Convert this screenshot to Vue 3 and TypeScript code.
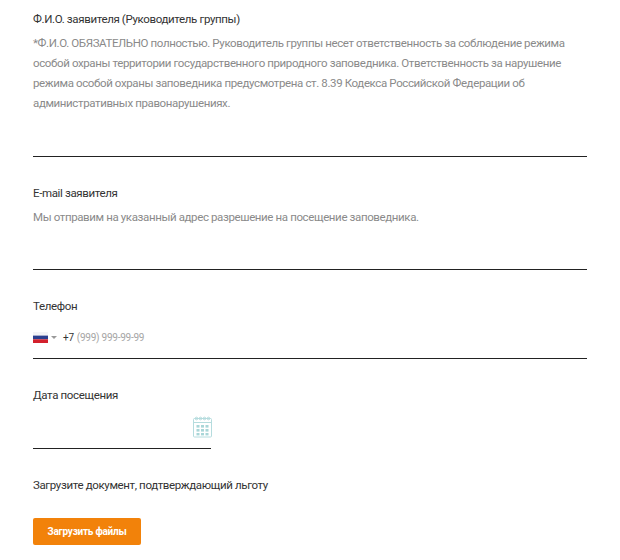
<script setup lang="ts">
const lines: string[] = [
  '*Ф.И.О. ОБЯЗАТЕЛЬНО полностью. Руководитель группы несет ответственность за соблюдение режима',
  'особой охраны территории государственного природного заповедника. Ответственность за нарушение',
  'режима особой охраны заповедника предусмотрена ст. 8.39 Кодекса Российской Федерации об',
  'административных правонарушениях.',
]
</script>

<template>
  <div class="form">
    <section class="field first">
      <div class="label">Ф.И.О. заявителя (Руководитель группы)</div>
      <p class="hint"><span v-for="l in lines" :key="l" class="hl">{{ l }}</span></p>
      <div class="input tall"></div>
    </section>
    <section class="field second">
      <div class="label">E-mail заявителя</div>
      <p class="hint"><span class="hl">Мы отправим на указанный адрес разрешение на посещение заповедника.</span></p>
      <div class="input tall2"></div>
    </section>
    <section class="field third">
      <div class="label">Телефон</div>
      <div class="input phone">
        <svg class="flag" width="15" height="11" viewBox="0 0 15 11">
          <rect width="15" height="3.6" fill="#f3f3f6" />
          <rect y="3.6" width="15" height="3.7" fill="#2b3f8f" />
          <rect y="7.3" width="15" height="3.7" fill="#d3202c" />
        </svg>
        <span class="caret"></span>
        <span class="code">+7</span>
        <span class="ph">(999) 999-99-99</span>
      </div>
    </section>
    <section class="field fourth">
      <div class="label">Дата посещения</div>
      <div class="date">
        <svg class="cal" width="20" height="22" viewBox="0 0 20 22" fill="none" stroke="#b5dcde" stroke-width="1">
          <rect x="0.5" y="2.5" width="18" height="18.5" rx="1" />
          <path d="M0.5 6.5H18.5" />
          <circle cx="3.5" cy="2.5" r="1.3" />
          <circle cx="7.5" cy="2.5" r="1.3" />
          <circle cx="11.5" cy="2.5" r="1.3" />
          <circle cx="15.5" cy="2.5" r="1.3" />
          <g fill="#a9d6d8" stroke="none">
            <rect x="3.5" y="9" width="3" height="2.6" />
            <rect x="8" y="9" width="3" height="2.6" />
            <rect x="12.5" y="9" width="3" height="2.6" />
            <rect x="3.5" y="13" width="3" height="2.6" />
            <rect x="8" y="13" width="3" height="2.6" />
            <rect x="12.5" y="13" width="3" height="2.6" />
            <rect x="3.5" y="17" width="3" height="2.4" />
            <rect x="8" y="17" width="3" height="2.4" />
            <rect x="12.5" y="17" width="3" height="2.4" />
          </g>
        </svg>
      </div>
    </section>
    <section class="field fifth">
      <div class="label">Загрузите документ, подтверждающий льготу</div>
      <button class="upload" type="button">Загрузить файлы</button>
    </section>
  </div>
</template>

<style>
html, body { background: #fff; }
</style>

<style scoped>
.form {
  width: 554px;
  padding: 10px 0 0 33px;
  font-family: Roboto, "Noto Sans", sans-serif;
  color: #333;
}
.field { display: flex; flex-direction: column; }
.label {
  font-size: 11.5px;
  line-height: 18px;
  letter-spacing: -0.36px;
  color: #333;
  white-space: nowrap;
}
.hint {
  margin: 5px 0 0;
  font-size: 11.5px;
  line-height: 20px;
  letter-spacing: -0.38px;
  color: #8a8a8a;
}
.hl { display: block; white-space: nowrap; }
.input { border-bottom: 1px solid #222; }
.tall { height: 43px; }
.tall2 { height: 42px; }
.second { margin-top: 27px; }
.third { margin-top: 27px; }
.phone {
  display: flex;
  align-items: center;
  height: 44px;
  font-size: 10px;
  letter-spacing: -0.25px;
  padding-top: 1px;
  box-sizing: border-box;
}
.flag { display: block; }
.caret {
  width: 0;
  height: 0;
  margin-left: 3px;
  border-left: 3px solid transparent;
  border-right: 3px solid transparent;
  border-top: 3px solid #999;
}
.code { margin-left: 6px; color: #333; }
.ph { margin-left: 3px; color: #a5a5a5; }
.fourth { margin-top: 27px; }
.date {
  position: relative;
  width: 178px;
  height: 44px;
  border-bottom: 1px solid #222;
}
.cal { position: absolute; right: -2px; top: 12px; }
.fifth { margin-top: 27px; }
.upload {
  align-self: flex-start;
  width: 108px;
  height: 27px;
  margin-top: 24px;
  border: 0;
  border-radius: 2px;
  background: #f2820a;
  color: #fff;
  font-family: inherit;
  font-size: 10px;
  font-weight: 700;
  letter-spacing: -0.25px;
  padding: 0;
}
</style>
